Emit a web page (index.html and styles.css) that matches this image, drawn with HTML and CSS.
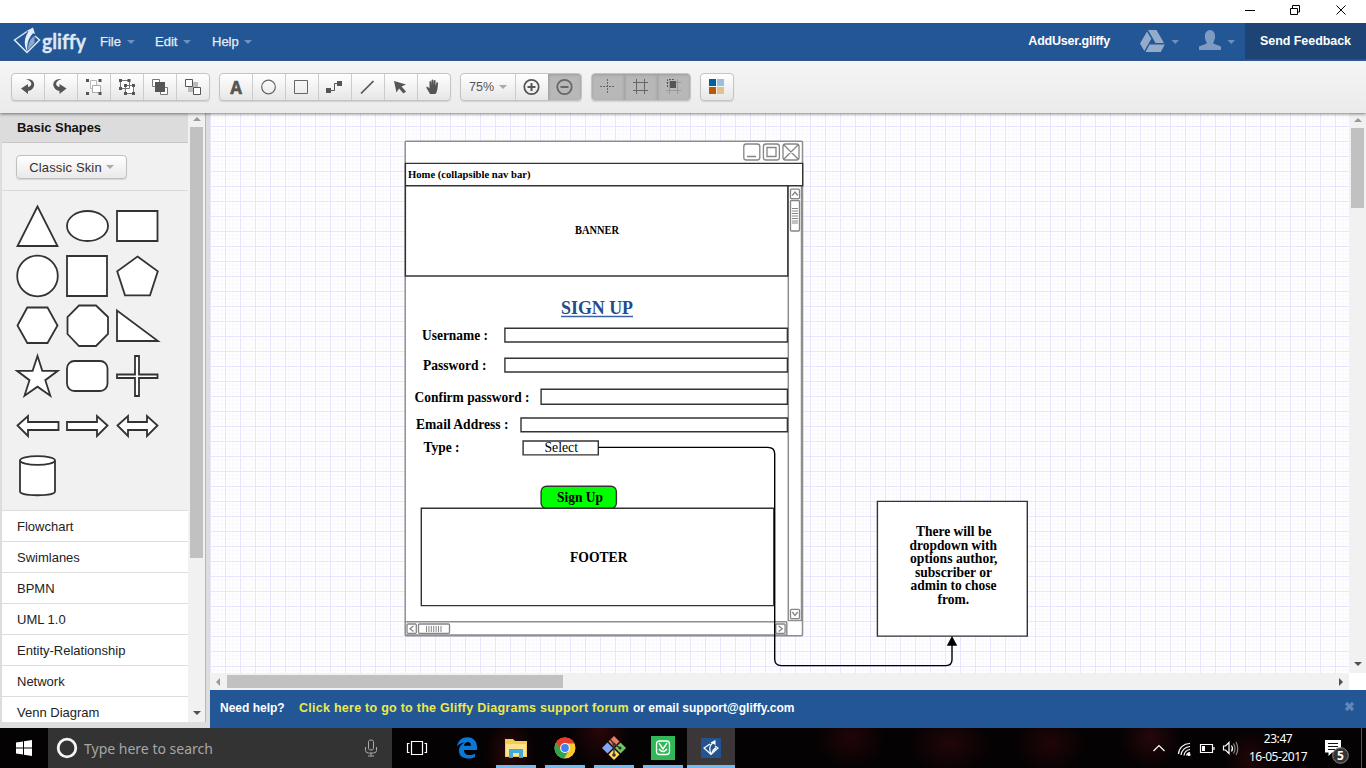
FILE: index.html
```html
<!DOCTYPE html>
<html lang="en">
<head>
<meta charset="utf-8">
<title>AddUser.gliffy</title>
<link rel="stylesheet" href="styles.css">
</head>
<body>
<div class="titlebar">
  <svg class="winbtns" viewBox="1240 0 126 23" width="126" height="23" fill="none" stroke="#000">
    <path d="M1245 10.500h10M1290.500 8.500h7v6h-7zM1292.500 8v-2.500h7v6.500h-2M1336.500 5.500l9 9M1345.500 5.500l-9 9"/>
  </svg>
</div>
<header class="header">
  <svg class="logo" viewBox="12 23 78 38" width="78" height="38">
    <path d="M27 31.500L14.500 40L27 52.500L39.500 40L35 36" fill="none" stroke="#dfe9f5" stroke-width="1.500"/>
    <path d="M27.500 52c-4-7-3.500-14 1-20.500l-2-.5 6.500-3.500 2 6.500-2-.8c-4 4.500-6.500 9.500-5.500 18.800z" fill="#e4edf7"/>
    <path d="M28 50c0-8 3-12 6.500-14v7z" fill="#8ba9cf"/>
    <text x="42" y="49" class="logo-text" textLength="44" lengthAdjust="spacingAndGlyphs">gliffy</text>
  </svg>
  <nav class="menus">
    <span class="menu">File<i class="caret"></i></span>
    <span class="menu">Edit<i class="caret"></i></span>
    <span class="menu">Help<i class="caret"></i></span>
  </nav>
  <span class="filename">AddUser.gliffy</span>
  <svg class="account" viewBox="1110 23 135 38" width="135" height="38">
    <g fill="#94abcb"><path d="M1148 30h8.500l7.500 13h-8.500zM1147 31.500l4.300 7.200-7 12.300-4.300-7.500zM1149.500 44.500h15.300l-4 7.500h-15.300z"/>
    <path d="M1199 50v-3.500c3-1.500 6.500-2 8-3.500-3-4-3.500-12.500 3-13 6.500.5 6 9 3 13 1.500 1.500 5 2 8 3.500V50z" fill="#7e9bc3"/></g>
    <path d="M1171.500 40h7.500l-3.750 4zM1227.500 40h7.500l-3.750 4z" fill="#6f90bd"/>
  </svg>
  <span class="feedback">Send Feedback</span>
</header>
<div class="toolbar">
  <div class="group g1">
    <span class="btn"><svg viewBox="0 0 33 28"><path d="M15 6c6-.5 9 3 8 7-1 3-3 4.500-6 5v3l-7-5.500 7-4.500v3c5-1 4.500-6-2-8z" fill="#555"/></svg></span>
    <span class="btn"><svg viewBox="0 0 33 28"><path d="M17.500 6c-6-.5-9 3-8 7 1 3 3 4.500 6 5v3l7-5.500-7-4.500v3c-5-1-4.500-6 2-8z" fill="#555"/></svg></span>
    <span class="btn"><svg viewBox="0 0 33 28"><path d="M13.500 7.500h6v8h-6z" fill="#fff" stroke="#bbb"/><path d="M15.500 12.500h8v7h-8z" fill="#fff" stroke="#aaa"/><path d="M9 6h3v3H9zM21.500 6h3v3h-3zM9 19h3v3H9zM21.500 19h3v3h-3z" fill="#555"/></svg></span>
    <span class="btn"><svg viewBox="0 0 33 28"><path d="M10.500 7.500h9v8h-9zM15.500 12.500h8v8h-8z" fill="#fff" stroke="#777"/><path d="M9 6h3v3H9zM17.500 6h3v3h-3zM9 14h3v3H9zM14 11h3v3h-3zM22 11h3v3h-3zM14 19h3v3h-3zM22 19h3v3h-3z" fill="#555"/></svg></span>
    <span class="btn"><svg viewBox="0 0 33 28"><path d="M9.500 6.500h7v7h-7zM17.500 14.500h7v7h-7z" fill="#fff" stroke="#777"/><path d="M12 9h10v10H12z" fill="#555"/></svg></span>
    <span class="btn"><svg viewBox="0 0 33 28"><path d="M12 9h10v10H12z" fill="#bbb"/><path d="M9.500 6.500h7v7h-7zM17.500 14.500h7v7h-7z" fill="#fff" stroke="#555"/></svg></span>
  </div>
  <div class="group g2">
    <span class="btn letter">A</span>
    <span class="btn"><svg viewBox="0 0 33 28"><circle cx="16.500" cy="14" r="6.800" fill="none" stroke="#666" stroke-width="1.200"/></svg></span>
    <span class="btn"><svg viewBox="0 0 33 28"><path d="M9.500 7.500h13v13h-13z" fill="none" stroke="#666"/></svg></span>
    <span class="btn"><svg viewBox="0 0 33 28"><path d="M8 15h5v5H8zM19 8h5v5h-5z" fill="#555"/><path d="M13 17.500h3.500v-7H20" fill="none" stroke="#555"/></svg></span>
    <span class="btn"><svg viewBox="0 0 33 28"><path d="M10 20.500L22.500 8" stroke="#555" stroke-width="1.700"/></svg></span>
    <span class="btn"><svg viewBox="0 0 33 28"><path d="M10 8l12 3.500-4.500 2 4.500 5-2.500 2-4.500-5-2.500 4z" fill="#555"/></svg></span>
    <span class="btn"><svg viewBox="0 0 33 28"><path d="M13 21l-3.500-6c-.5-1.500 1-1.800 2-.5l1 1V9c0-1.300 1.500-1.300 1.700 0l.3 3V7.500c0-1.500 1.800-1.500 2 0V12l.4-4c.1-1.300 1.700-1.200 1.700.2L18.500 13l.8-3c.3-1.300 1.900-1 1.700.4-.3 4-.5 8-2.500 10.600z" fill="#555"/></svg></span>
  </div>
  <div class="group g3">
    <span class="btn zoom">75%<i class="caret grey"></i></span>
    <span class="btn"><svg viewBox="0 0 33 28"><circle cx="16.500" cy="14" r="7.200" fill="none" stroke="#555" stroke-width="1.800"/><path d="M12.500 14h8M16.500 10v8" stroke="#555" stroke-width="2"/></svg></span>
    <span class="btn on"><svg viewBox="0 0 33 28"><circle cx="16.500" cy="14" r="7.200" fill="none" stroke="#666" stroke-width="1.800"/><path d="M12.500 14h8" stroke="#666" stroke-width="2"/></svg></span>
  </div>
  <div class="group g4">
    <span class="btn on"><svg viewBox="0 0 33 28"><path d="M9 13.500h15M16.500 6v15" stroke="#666" stroke-dasharray="2 1"/></svg></span>
    <span class="btn on"><svg viewBox="0 0 33 28"><path d="M9 9.500h15M9 17.500h15M12.500 6v15M20.500 6v15" stroke="#666"/></svg></span>
    <span class="btn on"><svg viewBox="0 0 33 28"><path d="M9 9.500h15M9 17.500h15M12.500 6v15M20.500 6v15" stroke="#999"/><path d="M13 8h6v7h-6z" fill="#555"/><path d="M10.500 14V6.500H18" stroke="#555" stroke-dasharray="2 1" fill="none"/></svg></span>
  </div>
  <div class="group g5">
    <span class="btn"><svg viewBox="0 0 33 28"><path fill="#00609c" d="M9 6h7v7H9z"/><path fill="#9dc0da" d="M17 6h7v7h-7z"/><path fill="#b95a00" d="M9 14h7v7H9z"/><path fill="#e4bf94" d="M17 14h7v7h-7z"/></svg></span>
  </div>
</div>
<div class="main">
  <aside class="sidebar">
    <div class="library">
      <div class="section-title">Basic Shapes</div>
      <div class="skin"><span class="skin-btn">Classic Skin<i class="caret grey"></i></span></div>
      <div class="shapes">
        <svg viewBox="2 191 186 319" width="186" height="319" fill="#fff" stroke="#333" stroke-width="1.800">
          <path d="M37.500 206.500L17.500 246h40z"/>
          <ellipse cx="87.500" cy="226" rx="20.500" ry="15"/>
          <path d="M117 211h40.500v30H117z"/>
          <circle cx="37.500" cy="276" r="20.300"/>
          <path d="M67 256h40v40H67z"/>
          <path d="M137.500 256.500l20.300 14.800-7.800 24h-25l-7.800-24z"/>
          <path d="M17.500 325.500l9.800-18h20.200l10 18-10 17.500H27.300z"/>
          <path d="M79 305.500h17l12 11.500v17L96 346H79l-11.500-12v-17z"/>
          <path d="M117 310.500V341h41z"/>
          <path d="M37.500 356l4.800 14.800h15.500l-12.500 9.400 5 15.500-12.800-9-13 9 5-15.500L17 370.800h15.600z"/>
          <rect x="67" y="361" width="40.500" height="30" rx="7.500"/>
          <path d="M135 356h4v18.500h18.500v3.500H139v18h-4v-18h-18v-3.500h18z"/>
          <path d="M17.500 425.500L28 416v6h30.500v8H28v6z"/>
          <path d="M107.500 425.500L97 416v6H67v8h30v6z"/>
          <path d="M117.500 425.500L128 416v6h19v-6l10.500 9.500L147 436v-6h-19v6z"/>
          <path d="M20 460.500v31c0 5 35 5 35 0v-31"/><ellipse cx="37.500" cy="460.500" rx="17.500" ry="4.300"/>
        </svg>
      </div>
      <div class="row">Flowchart</div>
      <div class="row">Swimlanes</div>
      <div class="row">BPMN</div>
      <div class="row">UML 1.0</div>
      <div class="row">Entity-Relationship</div>
      <div class="row">Network</div>
      <div class="row">Venn Diagram</div>
    </div>
    <div class="vscroll side-scroll"><i class="up"></i><b class="thumb"></b><i class="down"></i></div>
  </aside>
  <section class="work">
    <div class="work-row">
      <svg class="canvas" viewBox="210 113 1139 560" width="1139" height="560">
        <defs>
          <pattern id="minor" x="210" y="126" width="3.750" height="3.750" patternUnits="userSpaceOnUse"><path d="M.5 0v3.750M0 .5h3.750" stroke="#f8f8ff" stroke-width="1"/></pattern>
          <pattern id="major" x="210" y="126" width="15" height="15" patternUnits="userSpaceOnUse"><path d="M.5 0v15M0 .5h15" stroke="#e6e6fe"/></pattern>
        </defs>
        <path d="M210 113h1139v560H210z" fill="#fff"/>
        <path d="M210 113h1139v560H210z" fill="url(#minor)"/>
        <path d="M210 113h1139v560H210z" fill="url(#major)"/>
        <g fill="#fff" stroke="#8e8e8e" stroke-width="1.500">
          <rect x="405.200" y="141.200" width="397.300" height="494.500" rx="1"/>
          <path d="M405 621.700h382M405 635h382M788.300 186v434.500h14M786.800 622v13.500M801.500 186v434" fill="none"/>
          <g stroke="#858585" stroke-width="1.300">
            <rect x="743.800" y="144" width="16" height="16" rx="2.500"/><rect x="763.400" y="144" width="16" height="16" rx="2.500"/><rect x="783" y="144" width="16" height="16" rx="2.500"/>
            <path d="M747 156.500h9M767 147.500h9v9h-9zM784 145l14 14M798 145l-14 14"/>
            <rect x="790.500" y="189.200" width="9" height="9.500" rx="1"/><rect x="790.500" y="200.500" width="9" height="30.500" rx="1"/>
            <rect x="790.500" y="609.300" width="9" height="9.300" rx="1"/>
            <path d="M792.300 195.500l2.700-3.500 2.700 3.500M792.300 612l2.700 3.500 2.700-3.500" fill="none"/>
            <path d="M792 208.500h6M792 211h6M792 213.500h6M792 216h6M792 218.500h6M792 221h6M792 223h6" stroke-width="1"/>
            <rect x="407" y="624" width="9.300" height="9.300" rx="1"/><rect x="418.500" y="624" width="31" height="9.300" rx="1"/><rect x="775.800" y="624" width="9.300" height="9.300" rx="1"/>
            <path d="M413.500 626l-3.500 2.700 3.500 2.700M778.700 626l3.500 2.700-3.500 2.700" fill="none"/>
            <path d="M426.500 626v6M428.900 626v6M431.300 626v6M433.700 626v6M436.100 626v6M438.500 626v6M441 626v6" stroke-width="1"/>
          </g>
        </g>
        <g fill="#fff" stroke="#333" stroke-width="1.400">
          <path d="M405.400 163.400h397.300v22.400H405.400zM405.400 185.800h382.400V276H405.400z"/>
          <path d="M504.900 328.200h282.500v13.800H504.900zM504.900 358.200h282.500v13.800H504.900zM541.100 389.200h246.300v15H541.100zM521 418h266.400v13.800H521zM523.100 441h75.200v13.900h-75.200z"/>
          <rect x="541.100" y="486.200" width="75.300" height="22.300" rx="5.500" fill="#0f0"/>
          <path d="M421.300 508.300h352.500v97.300H421.300zM877.400 501.400h149.900v134.700H877.400z"/>
        </g>
        <path d="M598.500 447.400H768q6.700 0 6.700 6.700V659q0 6.600 6.600 6.600H946q6 0 6-6V645" fill="none" stroke="#000" stroke-width="1.400"/>
        <path d="M952 636l5.200 9.700h-10.400z"/>
        <g class="draw">
          <text x="408" y="178" font-size="10.500" textLength="122.500" lengthAdjust="spacingAndGlyphs">Home (collapsible nav bar)</text>
          <text x="575" y="234" font-size="11.500" textLength="44" lengthAdjust="spacingAndGlyphs">BANNER</text>
          <text x="561" y="314" font-size="18" textLength="72" lengthAdjust="spacingAndGlyphs" class="signup">SIGN UP</text>
          <path d="M561 316.500h72" stroke="#3a62a4" stroke-width="1.300"/>
          <text x="422" y="340" textLength="66" lengthAdjust="spacingAndGlyphs">Username :</text>
          <text x="423" y="370" textLength="63.500" lengthAdjust="spacingAndGlyphs">Password :</text>
          <text x="414.500" y="402" textLength="115" lengthAdjust="spacingAndGlyphs">Confirm password :</text>
          <text x="416" y="429" textLength="92.500" lengthAdjust="spacingAndGlyphs">Email Address :</text>
          <text x="423.500" y="452" textLength="36" lengthAdjust="spacingAndGlyphs">Type :</text>
          <text x="544.500" y="452" textLength="33.500" lengthAdjust="spacingAndGlyphs" class="plain">Select</text>
          <text x="557" y="502" textLength="46" lengthAdjust="spacingAndGlyphs">Sign Up</text>
          <text x="570" y="562" textLength="57.500" lengthAdjust="spacingAndGlyphs">FOOTER</text>
          <text x="916" y="536" textLength="75.500" lengthAdjust="spacingAndGlyphs">There will be</text>
          <text x="909.500" y="550" textLength="87.500" lengthAdjust="spacingAndGlyphs">dropdown with</text>
          <text x="910" y="563" textLength="87.500" lengthAdjust="spacingAndGlyphs">options author,</text>
          <text x="915" y="577" textLength="77" lengthAdjust="spacingAndGlyphs">subscriber or</text>
          <text x="910.500" y="590" textLength="86" lengthAdjust="spacingAndGlyphs">admin to chose</text>
          <text x="937.500" y="604" textLength="31.500" lengthAdjust="spacingAndGlyphs">from.</text>
        </g>
      </svg>
      <div class="vscroll canvas-scroll"><i class="up"></i><b class="thumb"></b><i class="down"></i></div>
    </div>
    <div class="hscroll"><i class="left"></i><b class="thumb"></b><i class="right"></i></div>
    <div class="help">
      <span class="need">Need help?</span><span class="forum">Click here to go to the Gliffy Diagrams support forum</span><span class="email">or email support@gliffy.com</span>
      <svg class="close" viewBox="0 0 11 11" width="11" height="11"><path d="M2 2l7 7M9 2L2 9" stroke="#5f86ba" stroke-width="3.200"/></svg>
    </div>
  </section>
</div>
<footer class="taskbar">
  <div class="start"><svg viewBox="0 0 16 16" width="16" height="16" fill="#fff"><path d="M0 2.500l7-1v6H0zM8 1.300L16 0v7.500H8zM0 8.500h7v6l-7-1zM8 8.500h8V16l-8-1.300z"/></svg></div>
  <div class="search">
    <svg viewBox="0 0 22 22" width="22" height="22"><circle cx="11" cy="11" r="8.800" fill="none" stroke="#f4f4f4" stroke-width="2.800"/></svg>
    <span class="placeholder">Type here to search</span>
    <svg viewBox="0 0 14 18" width="14" height="18" fill="none" stroke="#aaa"><path d="M4.500 2.500q0-1.500 2.500-1.500t2.500 1.500v7q0 1.500-2.500 1.500T4.500 9.500zM1.500 8v3.500q0 2.500 3 2.500h5q3 0 3-2.500V8M7 14v3M4 17h6"/></svg>
  </div>
  <div class="apps">
    <span class="app view"><svg viewBox="0 0 22 22" width="22" height="22" fill="none" stroke="#fff" stroke-width="1.200"><path d="M5.500 4.500h11v13h-11zM3.500 6.500h-2v9h2M18.500 6.500h2v9h-2"/></svg></span>
    <span class="app"><svg viewBox="0 0 22 22" width="22" height="22"><path d="M1 10C2-3 21-3 21 10v3H8c0 6 7 6 11 3.500V20c-6 3-16 2-16-6 0-5 3-7 6-8.500C3.500 6 1.500 8.500 1 10zm7-1.200h7c0-5-6-5-7 0z" fill="#0a78d7"/></svg></span>
    <span class="app open"><svg viewBox="0 0 22 22" width="22" height="22"><path d="M0 2h8l2 2h12v16H0z" fill="#f5cb52"/><path d="M1 7h20v12H1z" fill="#ffe28c"/><path d="M4 12h14v9h-4v-5H8v5H4z" fill="#42a8e0"/></svg></span>
    <span class="app open"><svg viewBox="0 0 22 22" width="22" height="22"><circle cx="11" cy="11" r="10.500" fill="#fbc82e"/><path d="M1.800 6A10.500 10.500 0 0 1 20.500 6.500H11L6.500 13z" fill="#e23e30"/><path d="M1.800 6A10.500 10.500 0 0 0 10 21.500l4.500-7.500-7.500-1z" fill="#31a450"/><circle cx="11" cy="11" r="4.900" fill="#fff"/><circle cx="11" cy="11" r="3.900" fill="#3d82ef"/></svg></span>
    <span class="app open"><svg viewBox="0 0 24 24" width="24" height="24"><path d="M12 0l5.500 5.500L12 11 6.500 5.500z" fill="#ef7a62"/><path d="M5.500 6.500L11 12l-5.500 5.500L0 12z" fill="#7ea6f4"/><path d="M18.500 6.500L24 12l-5.500 5.500L13 12z" fill="#73c55f"/><path d="M12 13l5.500 5.500L12 24l-5.500-5.500z" fill="#ffd95c"/><path d="M8 3l4 5v11M12 8l6 4" stroke="#333" stroke-width="1.300" fill="none"/><circle cx="12" cy="8" r="1.600" fill="#333"/><circle cx="12" cy="19" r="1.800" fill="#333"/><circle cx="18" cy="12" r="1.600" fill="#333"/></svg></span>
    <span class="app open"><svg viewBox="0 0 24 24" width="24" height="24"><path d="M0 0h24v24H0z" fill="#2fb758"/><rect x="5.500" y="5" width="13" height="13.500" rx="3" fill="none" stroke="#fff" stroke-width="1.300"/><path d="M8 7l4 6 4-6M8 13q4 5 8 0" stroke="#fff" stroke-width="1.400" fill="none"/></svg></span>
    <span class="app open active"><svg viewBox="0 0 20 20" width="20" height="20"><path d="M0 0h20v20H0z" fill="#24548f"/><path d="M9 6l-6 4 7 6.500L17 10l-3-2M10 16q-3-7 1.500-11" stroke="#fff" stroke-width="1.200" fill="none"/><path d="M9.500 4.500l5-2.500v5zM10 16q1-5 5-7v2z" fill="#fff"/></svg></span>
  </div>
  <div class="tray">
    <svg viewBox="1150 728 90 40" width="90" height="40" fill="none" stroke="#fff" stroke-width="1.200">
      <path d="M1153.500 751l5.500-5.500 5.500 5.500"/>
      <path d="M1178.500 754a11 11 0 0 1 11.500-10.500M1181 755a9.500 9.500 0 0 1 9-8.500M1184 755.500a7 7 0 0 1 6-6M1186.500 755.500a4 4 0 0 1 3.500-3"/><circle cx="1189" cy="754.500" r="1" fill="#fff"/>
      <path d="M1200.500 744.500h12v8h-12zM1214 747v3"/><path d="M1202 746h3v5h-3z" fill="#fff" stroke="none"/>
      <path d="M1223.500 746h2l3.500-3.500v11l-3.500-3.500h-2zM1231.500 745.500q2 3 0 6"/><path d="M1233.500 743.500q3 5 0 10M1236 742q3.500 6.500 0 13" stroke="#888"/>
    </svg>
    <div class="clock"><span>23:47</span><span>16-05-2017</span></div>
    <svg class="notify" viewBox="1322 728 44 40" width="44" height="40">
      <path d="M1325 740h16v12.500h-9l-3.500 3.500v-3.500h-3.500z" fill="#fff"/><path d="M1328 743.500h10M1328 746.500h10M1328 749.500h7" stroke="#111"/>
      <circle cx="1340.500" cy="755.500" r="7.800" fill="#333" stroke="#888"/><text x="1340.500" y="760" text-anchor="middle">5</text>
      <path d="M1361.500 728v40" stroke="#555"/>
    </svg>
  </div>
</footer>
</body>
</html>
```
FILE: styles.css
```css
* { box-sizing: border-box; }
body { margin: 0; width: 1366px; height: 768px; overflow: hidden; display: flex; flex-direction: column; background: #fff; font-family: "Liberation Sans", Arial, sans-serif; font-size: 13px; color: #222; }
svg { display: block; flex: none; }
.titlebar { height: 23px; flex: none; display: flex; justify-content: flex-end; }
.header { height: 38px; flex: none; display: flex; background: #235695; color: #fff; line-height: 37px; border-bottom: 1px solid #36629d; }
.logo { margin-left: 12px; overflow: visible; }
.logo-text { font: bold 21px Lato, sans-serif; fill: #dfe9f5; stroke: #dfe9f5; stroke-width: .3px; font-variant-ligatures: none; }
.menus { display: flex; width: 220px; padding-left: 10px; }
.menu { font-size: 13px; color: #e4edf8; display: flex; align-items: center; gap: 6px; -webkit-text-stroke: .25px #e4edf8; }
.menu:nth-child(1) { width: 55px; }
.menu:nth-child(2) { width: 57px; }
.menu:nth-child(3) { gap: 5px; }
.caret { border: 4px solid transparent; border-top-color: #6f90bd; border-bottom: 0; }
.caret.grey { border-top-color: #aaa; }
.filename { width: 800px; text-align: right; font-weight: bold; font-size: 12.500px; letter-spacing: -.22px; }
.account { margin-left: auto; }
.feedback { width: 121px; height: 36px; background: #1d4474; text-align: center; font-weight: bold; font-size: 12.500px; letter-spacing: -.05px; }
.toolbar { height: 52px; flex: none; display: flex; gap: 9px; padding: 12px 11px; background: linear-gradient(#f5f5f5, #ebebeb); position: relative; box-shadow: 0 1px 3px rgba(0,0,0,.5); }
.group { height: 28px; display: flex; border: 1px solid #c4c4c4; border-radius: 4px; overflow: hidden; background: linear-gradient(#fff, #e6e6e6); box-shadow: 0 1px 1px rgba(0,0,0,.12); }
.g1 { width: 199px; }
.g2 { width: 232px; }
.g3 { width: 122px; }
.g4 { width: 100px; }
.g5 { width: 34px; }
.btn { flex: 0 0 33px; min-width: 0; border-left: 1px solid #ccc; display: flex; align-items: center; justify-content: flex-end; color: #555; }
.btn:first-child { flex-basis: 32px; border-left: 0; }
.btn svg { width: 33px; height: 28px; }
.btn.on { background: #b8b8b8; border-color: #a6a6a6; box-shadow: inset 0 1px 3px rgba(0,0,0,.15); }
.btn.letter { font: bold 17px "Open Sans", sans-serif; -webkit-text-stroke: .5px #555; justify-content: center; }
.btn.zoom { flex: 0 0 54px; font-size: 12.500px; gap: 5px; justify-content: center; }
.main { height: 615px; flex: none; display: flex; }
.sidebar { width: 210px; display: flex; height: 615px; background: #ddd; padding-left: 2px; padding-bottom: 6px; }
.library { width: 186px; overflow: hidden; background: #fff; }
.section-title { height: 30px; padding-left: 15px; line-height: 29px; background: #dcdcdc; border-bottom: 1px solid #c8c8c8; font-weight: bold; color: #111; letter-spacing: -.04px; }
.skin { height: 48px; padding: 12px 14px; background: #f1f1f1; border-bottom: 1px solid #dadada; }
.skin-btn { display: flex; width: 111px; height: 24px; border: 1px solid #c0c0c0; border-radius: 4px; background: linear-gradient(#fff, #e9e9e9); align-items: center; justify-content: center; gap: 4px; color: #333; box-shadow: 0 1px 1px rgba(0,0,0,.12); letter-spacing: .15px; }
.shapes { height: 320px; background: #f1f1f1; border-bottom: 1px solid #ddd; }
.row { height: 31px; padding-left: 15px; line-height: 32px; font-size: 13px; border-bottom: 1px solid #ddd; }
.vscroll { width: 17px; background: #f1f1f1; display: flex; flex-direction: column; align-items: center; justify-content: space-between; }
.vscroll .thumb { width: 13px; background: #c1c1c1; margin-bottom: auto; }
.up { border: 4px solid transparent; border-bottom-color: #999; border-top: 0; }
.down { border: 4px solid transparent; border-top-color: #505050; border-bottom: 0; }
.side-scroll { height: 609px; box-shadow: 1px 0 #b8b8b8; padding: 4px 0 7px; }
.side-scroll .thumb { height: 431px; margin-top: 6px; }
.work { width: 1156px; display: flex; flex-direction: column; }
.work-row { display: flex; height: 560px; }
.canvas-scroll { padding: 5px 0 7px; }
.canvas-scroll .thumb { height: 80px; margin-top: 6px; }
.hscroll { height: 17px; width: 1139px; background: #f1f1f1; display: flex; align-items: center; padding: 0 6px; }
.hscroll .thumb { width: 336px; height: 13px; background: #c1c1c1; margin-left: 7px; margin-right: auto; }
.left { border: 4px solid transparent; border-right-color: #999; border-left: 0; }
.right { border: 4px solid transparent; border-left-color: #505050; border-right: 0; }
.help { height: 38px; display: flex; background: #235695; color: #fff; font-weight: bold; font-size: 12px; line-height: 37px; padding-left: 10px; white-space: nowrap; }
.need { width: 79px; }
.forum { color: #ecea4a; width: 334px; font-size: 12.500px; letter-spacing: .26px; }
.close { margin: 11px 11px 0 auto; }
.draw { font: bold 14px "Liberation Serif", "Times New Roman", serif; }
.plain { font-weight: normal; }
.signup { fill: #244b8c; }
.taskbar { height: 40px; flex: none; display: flex; background: radial-gradient(ellipse 25px 35px at 510px 25px, #2c0709, transparent), radial-gradient(ellipse 30px 40px at 600px 0, #2a0609, transparent), radial-gradient(ellipse 35px 30px at 850px 10px, #200507, transparent), radial-gradient(ellipse 40px 30px at 950px 15px, #220608, transparent), radial-gradient(ellipse 35px 30px at 1050px 15px, #200507, transparent), radial-gradient(ellipse 30px 30px at 1150px 10px, #26070a, transparent), radial-gradient(ellipse 25px 30px at 1250px 30px, #200608, transparent), #050203; }
.start { width: 48px; padding: 12px 16px; }
.search { width: 344px; background: #333; display: flex; align-items: center; padding: 0 14px 0 8px; }
.placeholder { flex: 1; margin-left: 6px; font: 14px "Noto Sans", sans-serif; color: #a6a6a6; }
.apps { display: flex; }
.app { width: 49px; display: flex; align-items: center; justify-content: center; padding-bottom: 1px; background: linear-gradient(#76b9ed, #76b9ed) center bottom / 0 3px no-repeat; }
.app.view { width: 50px; }
.app.open { background-size: 40px 3px; }
.app.active { width: 48px; background-color: #3b3638; background-size: 48px 3px; }
.tray { margin-left: auto; display: flex; color: #fff; }
.clock { width: 82px; display: flex; flex-direction: column; align-items: center; font: 12px/18px "Noto Sans", sans-serif; letter-spacing: -.45px; padding: 2px 6px 0 0; white-space: nowrap; }
.notify text { font: bold 12px "Noto Sans", sans-serif; fill: #fff; }
```
